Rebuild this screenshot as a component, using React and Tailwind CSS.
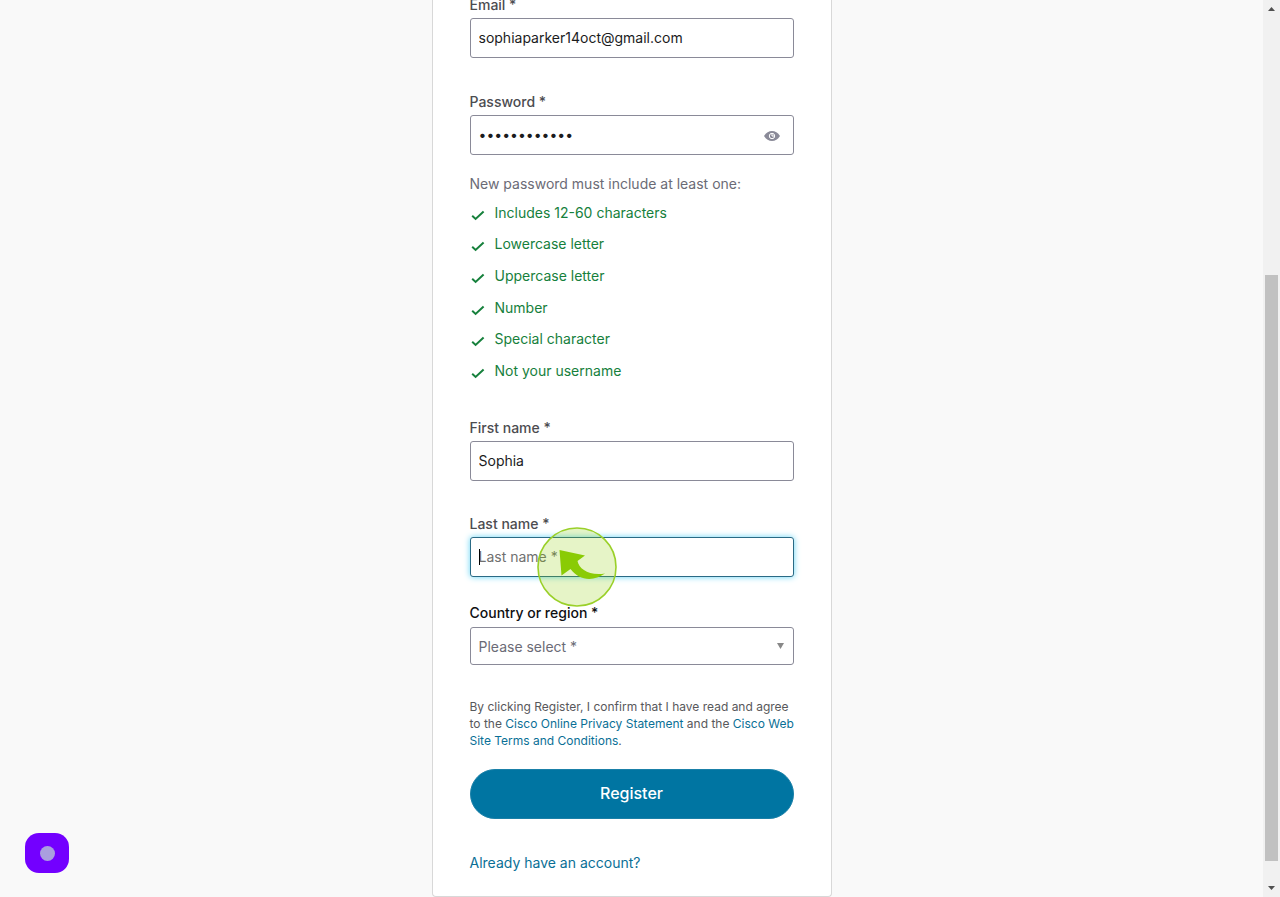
const requirements = [
  "Includes 12-60 characters",
  "Lowercase letter",
  "Uppercase letter",
  "Number",
  "Special character",
  "Not your username",
];

const inputClass =
  "block w-full h-10 rounded-[3px] border border-[#8a8a98] bg-white px-2 pb-0.5 text-sm text-[#1b1c1d] outline-none";
const labelClass = "mb-[5px] block text-sm leading-4 font-medium text-[#4c4c50]";

function CheckIcon() {
  return (
    <svg className="mt-1 h-3 w-4 shrink-0" viewBox="0 0 16 12" fill="none" aria-hidden="true">
      <path d="M2.2 6.8 L5.6 10 L13.6 2.6" stroke="#16803c" strokeWidth="2" />
    </svg>
  );
}

function EyeIcon() {
  return (
    <svg className="h-3 w-4" viewBox="0 0 16 12" aria-hidden="true">
      <path d="M0 6 C2 2.5 5 1 8 1 S14 2.5 16 6 C14 9.5 11 11 8 11 S2 9.5 0 6Z" fill="#8a8a98" />
      <circle cx="8" cy="6" r="2.7" fill="none" stroke="#fff" strokeWidth="1" />
      <path d="M8 3.6 V6 H10.4" fill="none" stroke="#fff" strokeWidth="1" />
    </svg>
  );
}

function ClickMarker() {
  return (
    <svg
      className="pointer-events-none absolute -top-2.5 left-[67px] h-20 w-20"
      viewBox="0 0 80 80"
      aria-hidden="true"
    >
      <circle cx="40" cy="40" r="39" fill="#8fce00" fillOpacity=".22" stroke="#9ad029" strokeWidth="1.6" />
      <path
        d="M22.5 23 L48 28.5 L40.5 34 C42 42 52 49 68 46.5 C56 55 42 53.5 33.5 42 L24.5 48.5 Z"
        fill="#8acb05"
      />
    </svg>
  );
}

function Scrollbar() {
  return (
    <div className="flex w-[17px] shrink-0 flex-col items-center bg-[#f1f1f1]" aria-hidden="true">
      <svg className="h-[17px] w-[17px]" viewBox="0 0 17 17">
        <path d="M5 11 L8.5 7 L12 11Z" fill="#505050" />
      </svg>
      <div className="flex w-[13px] flex-1 flex-col">
        <div className="flex-[258]" />
        <div className="flex-[586] bg-[#c1c1c1]" />
        <div className="flex-[19]" />
      </div>
      <svg className="h-[17px] w-[17px]" viewBox="0 0 17 17">
        <path d="M5 6 L8.5 10 L12 6Z" fill="#505050" />
      </svg>
    </div>
  );
}

export default function App() {
  return (
    <div className="flex h-screen overflow-hidden bg-[#f9f9f9] font-['Inter','Liberation_Sans',sans-serif]">
      <main className="flex flex-1 items-start justify-center">
        <form className="w-full max-w-[400px] rounded-b-sm border border-t-0 border-[#d8d8d8] bg-white px-[37px] pb-[23px]">
          <div className="-mt-[3px] mb-9">
            <label htmlFor="email" className={labelClass}>Email *</label>
            <input id="email" type="email" className={inputClass} defaultValue="sophiaparker14oct@gmail.com" />
          </div>

          <div>
            <label htmlFor="password" className={labelClass}>Password *</label>
            <div className="relative">
              <input id="password" type="password" className={inputClass} defaultValue="abcdefghijkl" />
              <button type="button" aria-label="Show password" className="absolute top-[15px] right-3.5">
                <EyeIcon />
              </button>
            </div>
          </div>

          <p className="mt-[19px] text-sm leading-5 text-[#6b6b76]">New password must include at least one:</p>
          <ul className="mt-[3px] mb-[33px] grid min-h-[190px] auto-rows-fr text-sm leading-5 text-[#16803c]">
            {requirements.map((item) => (
              <li key={item} className="flex items-center gap-[9px]">
                <CheckIcon />
                <span>{item}</span>
              </li>
            ))}
          </ul>

          <div className="mb-[35px]">
            <label htmlFor="first" className={labelClass}>First name *</label>
            <input id="first" type="text" className={inputClass} defaultValue="Sophia" />
          </div>

          <div className="mb-7">
            <label htmlFor="last" className={labelClass}>Last name *</label>
            <div className="relative">
              <input
                id="last"
                type="text"
                placeholder="Last name *"
                className="block h-10 w-full rounded-[3px] border border-[#2a6a85] bg-white px-2 pb-0.5 text-sm shadow-[0_0_6px_#64d4f5] outline-none placeholder:text-[#707070]"
              />
              <span className="absolute top-3 left-[9px] h-4 w-px bg-black" />
              <ClickMarker />
            </div>
          </div>

          <div>
            <label htmlFor="country" className="mb-1.5 block text-sm leading-4 font-medium text-[#0f1011]">
              Country or region *
            </label>
            <div className="relative">
              <select
                id="country"
                className="block h-[38px] w-full appearance-none rounded-[3px] border border-[#8a8a98] bg-white px-2 pt-0.5 text-sm text-[#6b6b76]"
              >
                <option>Please select *</option>
              </select>
              <svg className="pointer-events-none absolute top-4 right-2.5 h-1.5 w-[7px]" viewBox="0 0 7 6" aria-hidden="true">
                <path d="M0 0H7L3.5 6Z" fill="#888" />
              </svg>
            </div>
          </div>

          <p className="mt-[33px] -mr-1 text-xs leading-[17px] text-[#58585b]">
            By clicking Register, I confirm that I have read and agree to the{" "}
            <a href="#privacy" className="text-[#0a6f96]">Cisco Online Privacy Statement</a> and the{" "}
            <a href="#terms" className="text-[#0a6f96]">Cisco Web Site Terms and Conditions</a>.
          </p>

          <button
            type="submit"
            className="mt-5 block h-[50px] w-full rounded-full border border-[#1a80a8] bg-[#0075a2] pb-0.5 text-base font-medium text-white"
          >
            Register
          </button>

          <a href="#login" className="mt-[34px] block text-sm leading-5 text-[#0a6f96]">Already have an account?</a>
        </form>
      </main>

      <Scrollbar />

      <button
        type="button"
        aria-label="Recorder"
        className="fixed bottom-6 left-[25px] flex h-10 w-11 items-center justify-center rounded-[14px] bg-[#7300ff]"
      >
        <span className="h-[15px] w-[15px] rounded-full bg-[#aa9fdf]" />
      </button>
    </div>
  );
}
